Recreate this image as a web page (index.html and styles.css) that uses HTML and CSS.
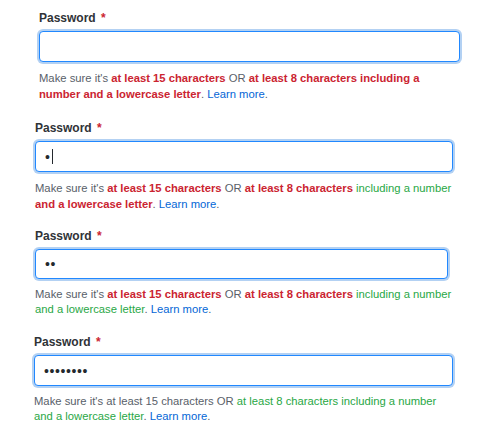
FILE: index.html
```html
<!DOCTYPE html>
<html>
<head>
<meta charset="utf-8">
<link rel="stylesheet" href="styles.css">
</head>
<body>
<div class="page">
  <div class="field field-1">
    <div class="label">Password <span class="req">*</span></div>
    <div class="input"></div>
    <p class="note">Make sure it's <span class="bad">at least 15 characters</span> OR <span class="bad">at least 8 characters including a number and a lowercase letter</span>. <a class="link">Learn more</a>.</p>
  </div>
  <div class="field field-2">
    <div class="label">Password <span class="req">*</span></div>
    <div class="input"><span class="dots">•</span><span class="caret"></span></div>
    <p class="note">Make sure it's <span class="bad">at least 15 characters</span> OR <span class="bad">at least 8 characters</span> <span class="good">including a number</span> <span class="bad">and a lowercase letter</span>. <a class="link">Learn more</a>.</p>
  </div>
  <div class="field field-3">
    <div class="label">Password <span class="req">*</span></div>
    <div class="input"><span class="dots">••</span></div>
    <p class="note">Make sure it's <span class="bad">at least 15 characters</span> OR <span class="bad">at least 8 characters</span> <span class="good">including a number and a lowercase letter</span>. <a class="link">Learn more</a>.</p>
  </div>
  <div class="field field-4">
    <div class="label">Password <span class="req">*</span></div>
    <div class="input"><span class="dots">••••••••</span></div>
    <p class="note">Make sure it's at least 15 characters OR <span class="good">at least 8 characters including a number and a lowercase letter</span>. <a class="link">Learn more</a>.</p>
  </div>
</div>
</body>
</html>
```

FILE: styles.css
```css
html, body {
  margin: 0;
  padding: 0;
  background: #ffffff;
}
body {
  font-family: "Liberation Sans", Arial, sans-serif;
  color: #24292e;
}
.page {
  display: flex;
  flex-direction: column;
  padding-top: 10px;
}
.field {
  display: flex;
  flex-direction: column;
}
.field-1 { padding-left: 39px; width: 421px; margin-bottom: 18px; }
.field-2 { padding-left: 35px; width: 418px; margin-bottom: 16px; }
.field-3 { padding-left: 35px; width: 413px; margin-bottom: 17px; }
.field-4 { padding-left: 34px; width: 419px; }
.label {
  font-size: 12px;
  line-height: 16px;
  font-weight: bold;
  color: #2f3337;
  margin-bottom: 5px;
}
.req {
  color: #cb2431;
  margin-left: 2px;
}
.input {
  box-sizing: border-box;
  height: 31px;
  border: 1px solid #2188ff;
  border-radius: 4px;
  box-shadow: 0 0 0 2px rgba(3, 102, 214, 0.3);
  background: #fff;
  display: flex;
  align-items: center;
  padding: 0 9px;
}
.field-3 .input { height: 30px; }
.dots {
  font-size: 14px;
  letter-spacing: 0.6px;
  color: #24292e;
  line-height: 1;
}
.caret {
  display: inline-block;
  width: 1px;
  height: 15px;
  background: #24292e;
  margin-left: 1px;
}
.note {
  margin: 8px 0 0 0;
  font-size: 11.25px;
  line-height: 16px;
  color: #586069;
}
.field-3 .note { margin-right: -5px; }
.field-3 .note, .field-4 .note { line-height: 15px; }
.bad {
  color: #cb2431;
  font-weight: bold;
}
.good {
  color: #28a745;
}
.link {
  color: #0366d6;
  text-decoration: none;
}
```
